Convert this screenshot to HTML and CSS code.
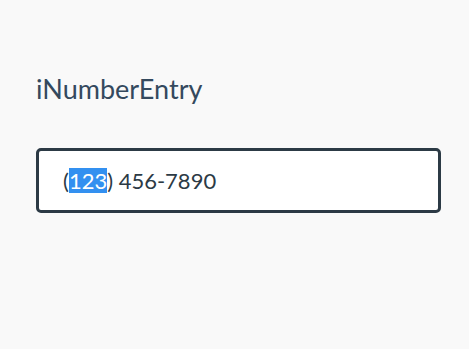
FILE: index.html
```html
<!DOCTYPE html>
<html lang="en">
<head>
<meta charset="UTF-8">
<meta name="viewport" content="width=device-width, initial-scale=1.0">
<title>iNumberEntry</title>
<link rel="stylesheet" href="styles.css">
</head>
<body>

<div class="demo">
    <h1 class="title">iNumberEntry</h1>
    <div class="number-entry">
        <span class="paren">(</span><span class="selected">123</span><span>) 456-7890</span>
    </div>
</div>

</body>
</html>
```

FILE: styles.css
```css
body {
    font-family: Lato, "Open Sans", sans-serif;
    background-color: #f9f9f9;
    color: #2c3e50;
    margin: 0;
}

.demo {
    padding: 0 28px 0 36px;
}

.title {
    font-size: 27px;
    font-weight: 400;
    line-height: 30px;
    margin: 74px 0 44px 0;
    color: #34495e;
}

.number-entry {
    display: flex;
    align-items: center;
    height: 59px;
    padding: 0 24px;
    background: #fff;
    border: 3px solid #2c3a45;
    border-radius: 5px;
    font-size: 22px;
    color: #2c3a45;
    white-space: pre;
}

.selected {
    background-color: #3390f0;
    color: #fff;
    line-height: 25px;
}
```
